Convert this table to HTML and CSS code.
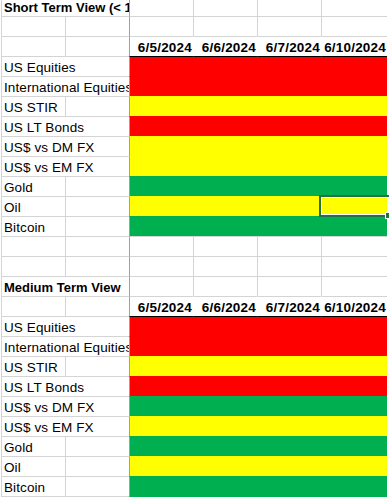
FILE: index.html
```html
<!DOCTYPE html>
<html>
<head>
<meta charset="utf-8">
<link rel="stylesheet" href="styles.css">
</head>
<body>
<div class="sheet">
  <div class="row first">
    <div class="cell span2 title">Short Term View (&lt; 1 month)</div>
    <div class="cell fz"></div><div class="cell"></div><div class="cell"></div><div class="cell"></div>
  </div>
  <div class="row">
    <div class="cell"></div><div class="cell"></div>
    <div class="cell fz"></div><div class="cell"></div><div class="cell"></div><div class="cell"></div>
  </div>
  <div class="row">
    <div class="cell"></div><div class="cell"></div>
    <div class="cell date fz">6/5/2024</div><div class="cell date">6/6/2024</div><div class="cell date">6/7/2024</div><div class="cell date">6/10/2024</div>
  </div>
  <div class="row top">
    <div class="cell span2">US Equities</div>
    <div class="cell fz r"></div><div class="cell r"></div><div class="cell r"></div><div class="cell r"></div>
  </div>
  <div class="row">
    <div class="cell span2">International Equities</div>
    <div class="cell fz r"></div><div class="cell r"></div><div class="cell r"></div><div class="cell r"></div>
  </div>
  <div class="row">
    <div class="cell">US STIR</div><div class="cell"></div>
    <div class="cell fz y"></div><div class="cell y"></div><div class="cell y"></div><div class="cell y"></div>
  </div>
  <div class="row">
    <div class="cell span2">US LT Bonds</div>
    <div class="cell fz r"></div><div class="cell r"></div><div class="cell r"></div><div class="cell r"></div>
  </div>
  <div class="row">
    <div class="cell span2">US$ vs DM FX</div>
    <div class="cell fz y"></div><div class="cell y"></div><div class="cell y"></div><div class="cell y"></div>
  </div>
  <div class="row">
    <div class="cell span2">US$ vs EM FX</div>
    <div class="cell fz y"></div><div class="cell y"></div><div class="cell y"></div><div class="cell y"></div>
  </div>
  <div class="row">
    <div class="cell">Gold</div><div class="cell"></div>
    <div class="cell fz g"></div><div class="cell g"></div><div class="cell g"></div><div class="cell g"></div>
  </div>
  <div class="row">
    <div class="cell">Oil</div><div class="cell"></div>
    <div class="cell fz y"></div><div class="cell y"></div><div class="cell y"></div><div class="cell y"></div>
  </div>
  <div class="row">
    <div class="cell">Bitcoin</div><div class="cell"></div>
    <div class="cell fz g"></div><div class="cell g"></div><div class="cell g"></div><div class="cell g"></div>
  </div>
  <div class="row">
    <div class="cell"></div><div class="cell"></div>
    <div class="cell fz"></div><div class="cell"></div><div class="cell"></div><div class="cell"></div>
  </div>
  <div class="row">
    <div class="cell"></div><div class="cell"></div>
    <div class="cell fz"></div><div class="cell"></div><div class="cell"></div><div class="cell"></div>
  </div>
  <div class="row">
    <div class="cell span2 title">Medium Term View</div>
    <div class="cell fz"></div><div class="cell"></div><div class="cell"></div><div class="cell"></div>
  </div>
  <div class="row">
    <div class="cell"></div><div class="cell"></div>
    <div class="cell date fz">6/5/2024</div><div class="cell date">6/6/2024</div><div class="cell date">6/7/2024</div><div class="cell date">6/10/2024</div>
  </div>
  <div class="row top">
    <div class="cell span2">US Equities</div>
    <div class="cell fz r"></div><div class="cell r"></div><div class="cell r"></div><div class="cell r"></div>
  </div>
  <div class="row">
    <div class="cell span2">International Equities</div>
    <div class="cell fz r"></div><div class="cell r"></div><div class="cell r"></div><div class="cell r"></div>
  </div>
  <div class="row">
    <div class="cell">US STIR</div><div class="cell"></div>
    <div class="cell fz y"></div><div class="cell y"></div><div class="cell y"></div><div class="cell y"></div>
  </div>
  <div class="row">
    <div class="cell span2">US LT Bonds</div>
    <div class="cell fz r"></div><div class="cell r"></div><div class="cell r"></div><div class="cell r"></div>
  </div>
  <div class="row">
    <div class="cell span2">US$ vs DM FX</div>
    <div class="cell fz g"></div><div class="cell g"></div><div class="cell g"></div><div class="cell g"></div>
  </div>
  <div class="row">
    <div class="cell span2">US$ vs EM FX</div>
    <div class="cell fz y"></div><div class="cell y"></div><div class="cell y"></div><div class="cell y"></div>
  </div>
  <div class="row">
    <div class="cell">Gold</div><div class="cell"></div>
    <div class="cell fz g"></div><div class="cell g"></div><div class="cell g"></div><div class="cell g"></div>
  </div>
  <div class="row">
    <div class="cell">Oil</div><div class="cell"></div>
    <div class="cell fz y"></div><div class="cell y"></div><div class="cell y"></div><div class="cell y"></div>
  </div>
  <div class="row last">
    <div class="cell">Bitcoin</div><div class="cell"></div>
    <div class="cell fz g"></div><div class="cell g"></div><div class="cell g"></div><div class="cell g"></div>
  </div>
  <div class="sel"></div>
  <div class="handle"></div>
</div>
</body>
</html>
```

FILE: styles.css
```css
html, body {
  margin: 0;
  padding: 0;
  overflow: hidden;
  background: #fff;
}

body {
  font-family: "Liberation Sans", Arial, sans-serif;
  font-size: 13.5px;
  color: #000;
}

.sheet {
  position: relative;
  margin-left: 1px;
}

.row {
  display: grid;
  grid-template-columns: 64px 64px 64px 64px 64px 66px;
  height: 20px;
}

.cell {
  box-sizing: border-box;
  border-top: 1px solid #d4d4d4;
  border-left: 1px solid #d4d4d4;
  padding: 3px 0 0 2px;
  line-height: 16px;
  white-space: nowrap;
  overflow: hidden;
  letter-spacing: 0.1px;
}

.first {
  height: 16px;
}

.first .cell {
  border-top: 0;
  padding-top: 0;
}

.span2 {
  grid-column: span 2;
}

.title {
  font-weight: bold;
  font-size: 13px;
  letter-spacing: 0;
}

.date {
  font-weight: bold;
  text-align: right;
  padding-right: 1px;
  letter-spacing: 0.2px;
  border-left-color: #fff;
}

.r {
  background: #ff0000;
  border-color: #ff0000;
}

.y {
  background: #ffff00;
  border-color: #ffff00;
}

.g {
  background: #00b050;
  border-color: #00b050;
}

.top .r,
.top .y,
.top .g {
  border-top-color: #000;
}

.last {
  height: 21px;
}

.last .cell {
  border-bottom: 1px solid #d4d4d4;
}

.last .g {
  border-bottom-color: #00b050;
}

.cell.fz {
  border-left-color: #a0a0a0;
}

.sel {
  position: absolute;
  left: 318px;
  top: 195px;
  width: 80px;
  height: 22px;
  box-sizing: border-box;
  border: 2px solid #217346;
  box-shadow: inset 0 0 0 1px #fff;
}

.handle {
  position: absolute;
  left: 384px;
  top: 212px;
  width: 7px;
  height: 7px;
  box-sizing: border-box;
  background: #217346;
  border: 1px solid #fff;
}
```
